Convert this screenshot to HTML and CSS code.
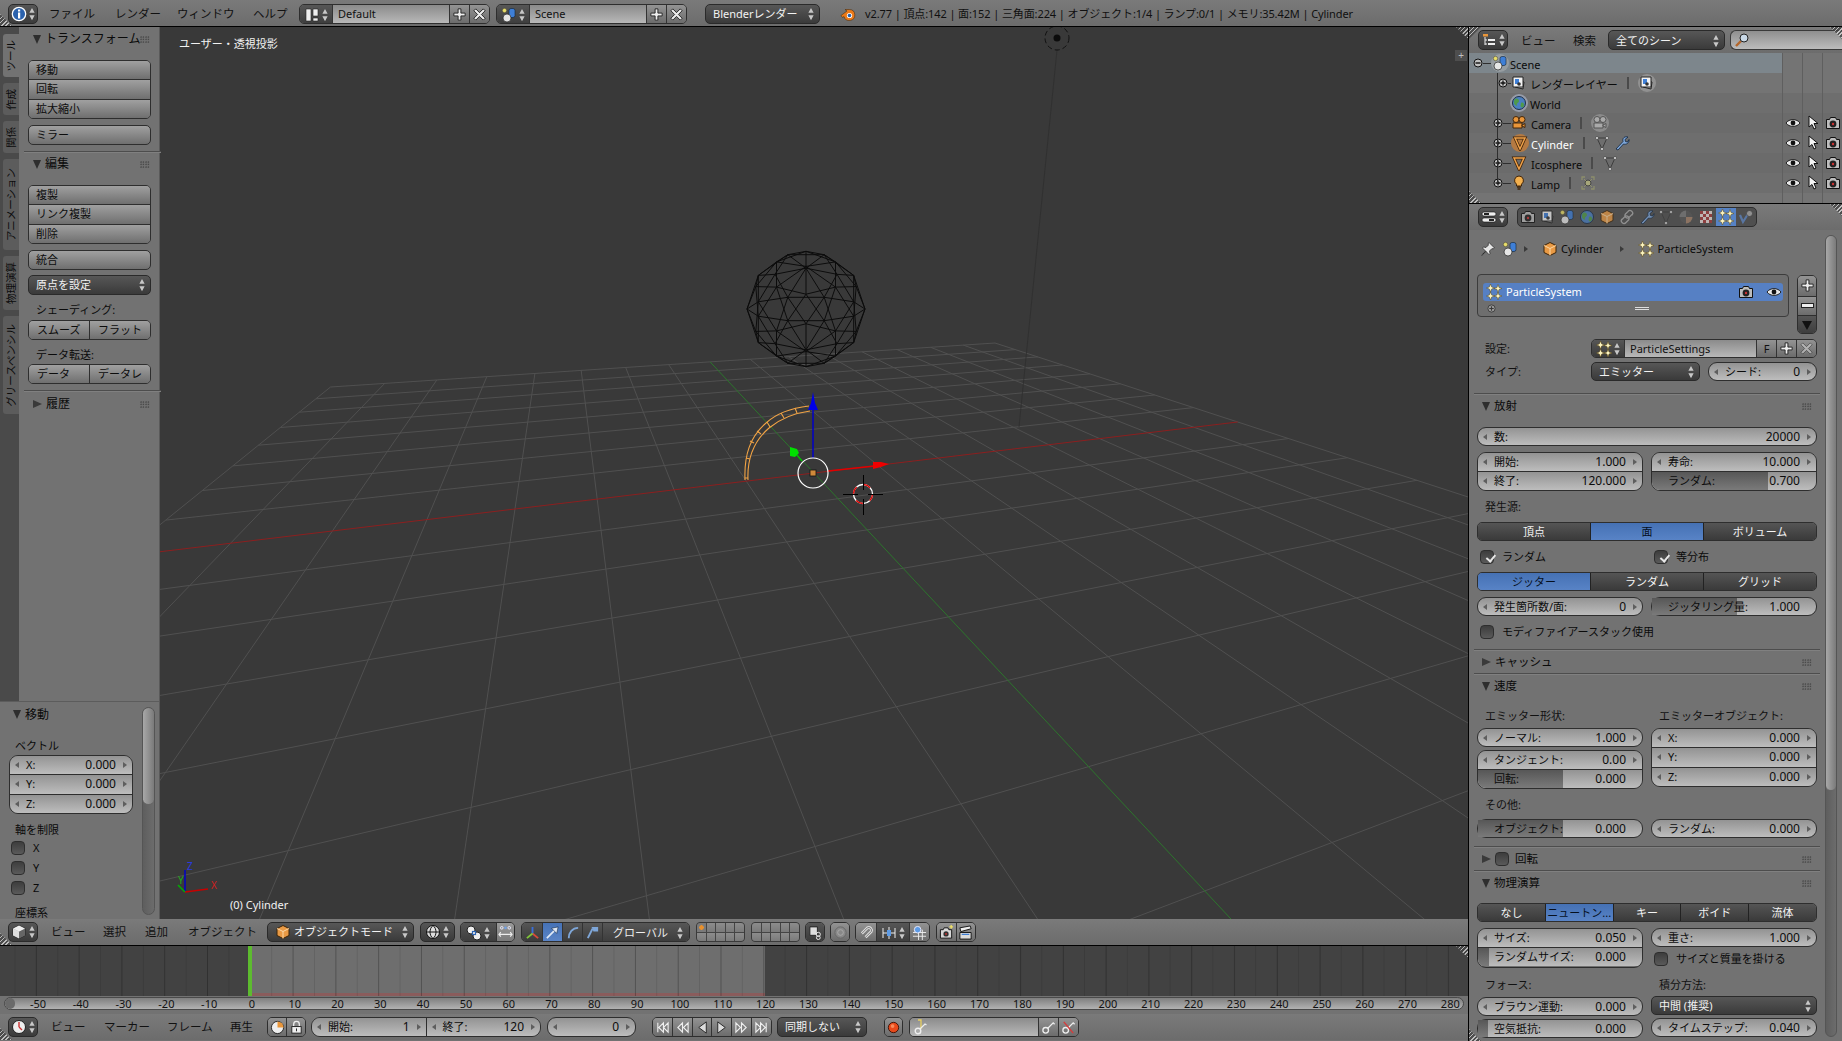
FILE: index.html
```html
<!DOCTYPE html>
<html lang="ja">
<head>
<meta charset="utf-8">
<title>Blender</title>
<link rel="stylesheet" href="styles.css">
</head>
<body>
<svg class="defs" width="0" height="0">
  <symbol id="i-ud" viewBox="0 0 8 16"><path d="M4 1 7 6.5H1zM4 15 1 9.500H7z" fill="currentColor"/></symbol>
  <symbol id="i-info" viewBox="0 0 16 16"><circle cx="8" cy="8" r="6.700" fill="#2b62ad" stroke="#fff" stroke-width="1.300"/><rect x="7" y="3.500" width="2.200" height="2" fill="#fff"/><rect x="7" y="6.500" width="2.200" height="6" fill="#fff"/></symbol>
  <symbol id="i-layout" viewBox="0 0 16 16"><path d="M2 2h5v12H2zM9 2h5v7H9zM9 11h5v3H9z" fill="#eee" stroke="#222" stroke-width=".6"/></symbol>
  <symbol id="i-scene" viewBox="0 0 16 16"><circle cx="3.500" cy="3.500" r="2.200" fill="#e8dd6a" stroke="#333" stroke-width=".5"/><rect x="8" y="1.500" width="6" height="9" rx="2" fill="#3f7fd6" stroke="#123" stroke-width=".6"/><circle cx="6" cy="11" r="4" fill="#e6e6e6" stroke="#222" stroke-width=".7"/></symbol>
  <symbol id="i-plus" viewBox="0 0 16 16"><path d="M6.500 2h3v4.500H14v3H9.500V14h-3V9.500H2v-3h4.500z" fill="#eee" stroke="#222"/></symbol>
  <symbol id="i-x" viewBox="0 0 16 16"><path d="M4 2l4 4 4-4 2 2-4 4 4 4-2 2-4-4-4 4-2-2 4-4-4-4z" fill="#eee" stroke="#222"/></symbol>
  <symbol id="i-blender" viewBox="0 0 16 16"><path d="M1 9.500 7 5 5 3.500h4.500A5.500 5.500 0 1 1 4 10.500L2.500 11.500z" fill="#ea7a1a" stroke="#3a2306" stroke-width=".5"/><circle cx="9.500" cy="9.500" r="2.600" fill="#fff"/><circle cx="9.500" cy="9.500" r="1.800" fill="#2b62ad"/></symbol>
  <symbol id="i-outliner" viewBox="0 0 16 16"><path d="M2 2h5v2.500H2z" fill="#e9963a"/><path d="M4 5v8M4 8h2M4 12h2" stroke="#eee" fill="none"/><path d="M7 7h7v2H7zM7 11h7v2H7z" fill="#eee"/></symbol>
  <symbol id="i-search" viewBox="0 0 16 16"><path d="M2 14 7 9" stroke="#b4662a" stroke-width="2.400"/><circle cx="10" cy="6" r="4" fill="#c9d8e6" stroke="#222"/></symbol>
  <symbol id="i-minus" viewBox="0 0 10 10"><circle cx="5" cy="5" r="4" fill="#c0c0c0" stroke="#111"/><path d="M2.500 5h5" stroke="#111" stroke-width="1.400"/></symbol>
  <symbol id="i-exp" viewBox="0 0 10 10"><circle cx="5" cy="5" r="4" fill="#c0c0c0" stroke="#111"/><path d="M2.500 5h5M5 2.500v5" stroke="#111" stroke-width="1.300"/></symbol>
  <symbol id="i-rl" viewBox="0 0 16 16"><path d="M4 5l9 2-1 7-8-2z" fill="#bbb" stroke="#222"/><path d="M2 2h10v10H2z" fill="#f2f2f2" stroke="#222"/><path d="M4 4h4v5H4z" fill="#3f7fd6"/><circle cx="8" cy="9" r="1.800" fill="#333"/></symbol>
  <symbol id="i-world" viewBox="0 0 16 16"><circle cx="8" cy="8" r="6.500" fill="#4a7fc0" stroke="#1d2f47"/><path d="M4 4c2-1 4 0 4 2s-3 2-2 4-3 0-3-2 0-3 1-4zM10 8c2-1 3 0 3 2s-2 3-3 2 0-3 0-4z" fill="#4f9a4a"/></symbol>
  <symbol id="i-camera" viewBox="0 0 16 16"><circle cx="5" cy="4.500" r="3" fill="#e9963a" stroke="#43260a"/><circle cx="11" cy="4.500" r="3" fill="#e9963a" stroke="#43260a"/><path d="M2 8h9v5H2z" fill="#e9963a" stroke="#43260a"/><path d="M11 10l3-1.500v4L11 11z" fill="#e9963a" stroke="#43260a"/></symbol>
  <symbol id="i-camerag" viewBox="0 0 16 16"><circle cx="5" cy="4.500" r="3" fill="#aaa" stroke="#555"/><circle cx="11" cy="4.500" r="3" fill="#aaa" stroke="#555"/><path d="M2 8h9v5H2z" fill="#aaa" stroke="#555"/><path d="M11 10l3-1.500v4L11 11z" fill="#aaa" stroke="#555"/></symbol>
  <symbol id="i-mesh" viewBox="0 0 16 16"><path d="M3 3h10L8 14z" fill="none" stroke="#3f2308" stroke-width="3"/><path d="M3 3h10L8 14z" fill="none" stroke="#f0a24a" stroke-width="1.500"/></symbol>
  <symbol id="i-meshg" viewBox="0 0 16 16"><path d="M3 3h10L8 14z" fill="none" stroke="#3c3c3c"/><circle cx="3" cy="3" r="1.500" fill="#ddd" stroke="#222" stroke-width=".5"/><circle cx="13" cy="3" r="1.500" fill="#ddd" stroke="#222" stroke-width=".5"/><circle cx="8" cy="14" r="1.500" fill="#ddd" stroke="#222" stroke-width=".5"/></symbol>
  <symbol id="i-wrench" viewBox="0 0 16 16"><path d="M2 14 9 6.500C8 3 11 1 14 2L11 4.500l.5 2 2 .5L15 4.500C15.500 8 12 10 9.500 9L4 15z" fill="#7ea6d8" stroke="#10233c" stroke-width=".8"/></symbol>
  <symbol id="i-lamp" viewBox="0 0 16 16"><path d="M8 1a4.500 4.500 0 0 0-2.500 8.200V11h5V9.200A4.500 4.500 0 0 0 8 1z" fill="#f3b04e" stroke="#3f2308"/><path d="M6 12h4M6.500 14h3" stroke="#3f2308" stroke-width="1.400"/></symbol>
  <symbol id="i-lampd" viewBox="0 0 16 16"><circle cx="8" cy="8" r="3" fill="#a7a77a" stroke="#444"/><path d="M2 5V2h3M14 5V2h-3M2 11v3h3M14 11v3h-3" fill="none" stroke="#8d8f6c" stroke-width="1.300"/><path d="M4 4l2 2M12 4l-2 2M4 12l2-2M12 12l-2-2" stroke="#8d8f6c"/></symbol>
  <symbol id="i-eye" viewBox="0 0 16 16"><path d="M1 8c3-4.500 11-4.500 14 0-3 4.500-11 4.500-14 0z" fill="#e8e8e8" stroke="#222"/><circle cx="8" cy="8" r="2.400" fill="#111"/></symbol>
  <symbol id="i-cursor" viewBox="0 0 16 16"><path d="M4 1v11l3-2.500 2 4.500 2-1-2-4.500h4z" fill="#f4f4f4" stroke="#111"/></symbol>
  <symbol id="i-rcam" viewBox="0 0 16 16"><path d="M1.500 4.500h3l1-2h5l1 2h3v9h-13z" fill="#bdbdbd" stroke="#111"/><circle cx="8" cy="9" r="3.400" fill="#222"/><circle cx="8" cy="9" r="1.200" fill="#c33"/></symbol>
  <symbol id="i-props" viewBox="0 0 16 16"><rect x="1" y="3" width="14" height="4" rx="2" fill="#eee" stroke="#111" stroke-width=".6"/><rect x="1" y="9" width="14" height="4" rx="2" fill="#eee" stroke="#111" stroke-width=".6"/><rect x="3" y="4" width="5" height="2" fill="#222"/><rect x="8" y="10" width="5" height="2" fill="#222"/></symbol>
  <symbol id="i-cube" viewBox="0 0 16 16"><path d="M8 1.500 14 4.500v7L8 14.500 2 11.500v-7z" fill="#e99a45" stroke="#3d2408"/><path d="M2 4.500 8 7.500l6-3M8 7.500v7" fill="none" stroke="#fbd7a6"/></symbol>
  <symbol id="i-cubew" viewBox="0 0 16 16"><path d="M8 1.500 14 4.500v7L8 14.500 2 11.500v-7z" fill="#aaa" stroke="#222"/><path d="M8 7.500 14 4.500v7L8 14.500z" fill="#666"/><path d="M2 4.500 8 1.500 14 4.500 8 7.500z" fill="#eee"/><path d="M2 4.500 8 7.500V14.500L2 11.500z" fill="#ddd"/></symbol>
  <symbol id="i-link" viewBox="0 0 16 16"><path d="M2.500 11 6 7.500a2.500 2.500 0 0 1 3.500 3.500L7 13.500A2.500 2.500 0 0 1 3 10zM13.500 5 10 8.500A2.500 2.500 0 0 1 6.500 5L9 2.500A2.500 2.500 0 0 1 13 6z" fill="none" stroke="#aaa" stroke-width="1.300"/></symbol>
  <symbol id="i-mat" viewBox="0 0 16 16"><circle cx="8" cy="8" r="6.500" fill="#565656"/><path d="M8 8h6.500A6.500 6.500 0 0 1 8 14.500z" fill="#a4826a"/><path d="M1.500 8A6.500 6.500 0 0 1 8 1.500V8z" fill="#7a7a7a"/></symbol>
  <symbol id="i-tex" viewBox="0 0 16 16"><rect x="2" y="2" width="12" height="12" fill="#e8dcd8"/><path d="M2 2h3v3H2zM8 2h3v3H8zM5 5h3v3H5zM11 5h3v3h-3zM2 8h3v3H2zM8 8h3v3H8zM5 11h3v3H5zM11 11h3v3h-3z" fill="#a63a3a"/></symbol>
  <symbol id="i-part" viewBox="0 0 16 16"><g fill="#fdf6c2" stroke="#5e4812" stroke-width=".5"><path d="M4.500 0 5.600 2.900 8.500 4 5.600 5.100 4.500 8 3.400 5.100.5 4 3.400 2.900z"/><path d="M12 .5 13 3.500 16 4.500 13 5.500 12 8.500 11 5.500 8 4.500 11 3.500z"/><path d="M4.500 8 5.600 10.900 8.500 12 5.600 13.100 4.500 16 3.400 13.100.5 12 3.400 10.900z"/><path d="M12 8 13 11 16 12 13 13 12 16 11 13 8 12 11 11z"/></g></symbol>
  <symbol id="i-phys" viewBox="0 0 16 16"><path d="M2 6l3 7 5-8" fill="none" stroke="#5d86c4" stroke-width="2.200"/><circle cx="11.500" cy="4.500" r="3" fill="#aaa" stroke="#333" stroke-width=".6"/></symbol>
  <symbol id="i-pin" viewBox="0 0 16 16"><path d="M9 1.500 14.500 7l-1.500 1-1-.5-2.500 2.500.5 2.500-1 1L5.500 10 2 14.500l-.5-.5L6 10.500 2.500 7l1-1 2.500.500L8.500 4 8 3z" fill="#e6e6e6" stroke="#222" stroke-width=".7"/></symbol>
  <symbol id="i-shade" viewBox="0 0 16 16"><circle cx="8" cy="8" r="6.500" fill="#ddd" stroke="#111"/><path d="M1.500 8h13M8 1.500c-4 3-4 10 0 13M8 1.500c4 3 4 10 0 13" fill="none" stroke="#111"/></symbol>
  <symbol id="i-pivot" viewBox="0 0 16 16"><circle cx="5" cy="5" r="4" fill="#eee" stroke="#222"/><circle cx="11" cy="11" r="4" fill="#eee" stroke="#222"/><rect x="6.500" y="6.500" width="3" height="3" fill="#eee" stroke="#2c62b0" stroke-width="1.200"/></symbol>
  <symbol id="i-around" viewBox="0 0 16 16"><circle cx="4" cy="3" r="1.400" fill="none" stroke="#eef"/><circle cx="8" cy="3" r="1.400" fill="#6fa0e6"/><circle cx="12" cy="3" r="1.400" fill="none" stroke="#eef"/><path d="M1 10h14M3 7.500 1 10l2 2.500M13 7.500l2 2.500-2 2.500" fill="none" stroke="#eee" stroke-width="1.200"/></symbol>
  <symbol id="i-axes" viewBox="0 0 16 16"><path d="M8 2v8" stroke="#3a6fd8" stroke-width="2"/><path d="M8 9 14 14" stroke="#d84a3a" stroke-width="2"/><path d="M8 9 2 14" stroke="#7fc43a" stroke-width="2"/></symbol>
  <symbol id="i-arrow" viewBox="0 0 16 16"><path d="M2 14 10 6" stroke="#dfe8f5" stroke-width="1.800"/><path d="M14 2 12.500 9 7 3.500z" fill="#dfe8f5" stroke="#10233c" stroke-width=".6"/></symbol>
  <symbol id="i-rot" viewBox="0 0 16 16"><path d="M4 14C4 8 8 3 14 3" fill="none" stroke="#7ea6d8" stroke-width="2"/></symbol>
  <symbol id="i-scale" viewBox="0 0 16 16"><path d="M3 14 8 4" stroke="#7ea6d8" stroke-width="2"/><path d="M7 2h7v5H9z" fill="#7ea6d8"/></symbol>
  <symbol id="i-parent" viewBox="0 0 16 16"><path d="M2 2h8v9H2z" fill="#ddd" stroke="#222"/><circle cx="11" cy="10" r="2.200" fill="none" stroke="#eee"/><circle cx="11" cy="13.500" r="2" fill="none" stroke="#eee"/></symbol>
  <symbol id="i-prop" viewBox="0 0 16 16"><circle cx="8" cy="8" r="6" fill="#888" stroke="#666"/><circle cx="8" cy="8" r="3" fill="none" stroke="#aaa"/></symbol>
  <symbol id="i-magnet" viewBox="0 0 16 16"><path d="M3 9 9 3a3 3 0 0 1 4 4l-6 6" fill="none" stroke="#ddd" stroke-width="3"/><path d="M3 9 9 3a3 3 0 0 1 4 4l-6 6" fill="none" stroke="#555" stroke-width=".8"/></symbol>
  <symbol id="i-snapm" viewBox="0 0 16 16"><path d="M2 3v10M14 3v10M8 2v12" stroke="#eee"/><path d="M2 8h12" stroke="#eee"/><rect x="6" y="5" width="4" height="6" fill="#5d9be6"/></symbol>
  <symbol id="i-snap" viewBox="0 0 16 16"><path d="M1 8h14M1 12h14M7 5v11M11 5v11" stroke="#eee"/><circle cx="6" cy="5" r="3.500" fill="#5d9be6" stroke="#eef"/></symbol>
  <symbol id="i-rimg" viewBox="0 0 16 16"><path d="M1.500 5h3l1-2h4l1 2h3v9h-12z" fill="#d8d8d8" stroke="#111"/><circle cx="7.500" cy="9.500" r="2.800" fill="#333"/><circle cx="7.500" cy="9.500" r="1" fill="#c33"/><path d="M13 0v4M11 2h4" stroke="#f2e266" stroke-width="1.400"/></symbol>
  <symbol id="i-ranim" viewBox="0 0 16 16"><path d="M2 8h12v7H2z" fill="#dcdcdc" stroke="#111"/><path d="M2 3 13 1l1 3L3 7z" fill="#eee" stroke="#111"/><path d="M4 10h8" stroke="#3f7fd6" stroke-width="1.500"/></symbol>
  <symbol id="i-clock" viewBox="0 0 16 16"><circle cx="8" cy="8" r="6.500" fill="#eee" stroke="#222"/><path d="M8 8V3M8 8l3 3" stroke="#c33" stroke-width="1.400"/></symbol>
  <symbol id="i-preview" viewBox="0 0 16 16"><circle cx="8" cy="8" r="6.500" fill="#eee" stroke="#222"/><path d="M8 8V1.500A6.500 6.500 0 0 1 14.500 8z" fill="#e9963a"/></symbol>
  <symbol id="i-lock" viewBox="0 0 16 16"><path d="M5 7V4.500a3 3 0 0 1 6 0V7" fill="none" stroke="#eee" stroke-width="1.400"/><rect x="3" y="7" width="10" height="7" fill="#eee" stroke="#222"/><path d="M8 9v3" stroke="#222"/></symbol>
  <symbol id="i-first" viewBox="0 0 16 16"><path d="M3 3v10M9 3 4 8l5 5zM14 3 9 8l5 5z" fill="none" stroke="#eee" stroke-width="1.200"/></symbol>
  <symbol id="i-prev" viewBox="0 0 16 16"><path d="M8 3 3 8l5 5zM14 3 9 8l5 5z" fill="none" stroke="#eee" stroke-width="1.200"/></symbol>
  <symbol id="i-back" viewBox="0 0 16 16"><path d="M12 2 4 8l8 6z" fill="#ddd" stroke="#222"/></symbol>
  <symbol id="i-play" viewBox="0 0 16 16"><path d="M4 2l8 6-8 6z" fill="#ddd" stroke="#222"/></symbol>
  <symbol id="i-next" viewBox="0 0 16 16"><path d="M2 3l5 5-5 5zM8 3l5 5-5 5z" fill="none" stroke="#eee" stroke-width="1.200"/></symbol>
  <symbol id="i-last" viewBox="0 0 16 16"><path d="M13 3v10M2 3l5 5-5 5zM7 3l5 5-5 5z" fill="none" stroke="#eee" stroke-width="1.200"/></symbol>
  <symbol id="i-rec" viewBox="0 0 16 16"><circle cx="8" cy="8" r="5.500" fill="#e8491a" stroke="#3a1005"/><circle cx="7" cy="6.500" r="2" fill="#f78a5a"/></symbol>
  <symbol id="i-keyset" viewBox="0 0 16 16"><path d="M6 1h3v9" fill="none" stroke="#e8d060" stroke-width="1.300"/><circle cx="6" cy="12" r="2.800" fill="none" stroke="#eee" stroke-width="1.400"/><path d="M8 10 13 5l1.500 1" fill="none" stroke="#eee" stroke-width="1.300"/></symbol>
  <symbol id="i-key" viewBox="0 0 16 16"><circle cx="5" cy="11" r="3" fill="none" stroke="#eee" stroke-width="1.400"/><path d="M7 9l6-6 1.500 1.500" fill="none" stroke="#eee" stroke-width="1.400"/></symbol>
  <symbol id="i-keyx" viewBox="0 0 16 16"><circle cx="5" cy="11" r="3" fill="none" stroke="#eee" stroke-width="1.400"/><path d="M7 9l6-6 1.500 1.500" fill="none" stroke="#eee" stroke-width="1.400"/><path d="M3 2l10 12" stroke="#d83a3a" stroke-width="1.500"/></symbol>
</svg>

<div class="app">
  <header class="hdr topbar">
    <div class="hatch h-bl"></div>
    <div class="hbtn w30 ml8"><svg class="ic"><use href="#i-info"/></svg><svg class="ud"><use href="#i-ud"/></svg></div>
    <div class="menu w66 ml11">ファイル</div><div class="menu w62">レンダー</div><div class="menu w76">ウィンドウ</div><div class="menu w45">ヘルプ</div>
    <div class="grp w191 ml1">
      <div class="hbtn-in w32"><svg class="ic"><use href="#i-layout"/></svg><svg class="ud"><use href="#i-ud"/></svg></div>
      <div class="tf f1">Default</div>
      <div class="ib w20"><svg class="ic"><use href="#i-plus"/></svg></div>
      <div class="ib w20"><svg class="ic"><use href="#i-x"/></svg></div>
    </div>
    <div class="grp w191 ml6">
      <div class="hbtn-in w32"><svg class="ic"><use href="#i-scene"/></svg><svg class="ud"><use href="#i-ud"/></svg></div>
      <div class="tf f1">Scene</div>
      <div class="ib w20"><svg class="ic"><use href="#i-plus"/></svg></div>
      <div class="ib w20"><svg class="ic"><use href="#i-x"/></svg></div>
    </div>
    <div class="dd w115 ml18"><span>Blenderレンダー</span><svg class="ud"><use href="#i-ud"/></svg></div>
    <svg class="ic ml20"><use href="#i-blender"/></svg>
    <div class="stats">v2.77 | 頂点:142 | 面:152 | 三角面:224 | オブジェクト:1/4 | ランプ:0/1 | メモリ:35.42M | Cylinder</div>
  </header>

  <div class="main">
    <div class="leftcol">
      <section class="viewport">
        <svg class="scene3d" viewBox="0 27 1468 892">
          <g id="grid" class="gridlines"></g>
          <line id="axis-x" class="axis-x"/>
          <line id="axis-y" class="axis-y"/>
          <line x1="1057" y1="50" x2="1019" y2="427" class="lampline"/>
          <circle cx="1057" cy="38" r="3.500" fill="#0c0c0c"/>
          <circle cx="1057" cy="38" r="12" class="lampring"/>
          <g id="ico" class="ico"></g>
          <path d="M745 480C744 455 750 437 766 423 778 412 792 408 809 406M748 480C747 458 754 441 769 428 781 418 795 413 810 411" class="cyl"/>
          <path d="M745 478 748 478M746 458 750 459M750 441 754 443M757 431 761 434M767 422 770 427M781 413 784 418M795 408 797 413" class="cyl"/>
          <line x1="813" y1="458" x2="813" y2="405" stroke="#0000c8" stroke-width="1.500"/>
          <path d="M813 392 815 403 818 410H808L811 403z" fill="#0000e6"/>
          <line x1="802" y1="461" x2="796" y2="454" stroke="#00c000" stroke-width="1.200"/>
          <path d="M790 447 797 449 799 453 795 457 790 456z" fill="#00e000"/>
          <line x1="828" y1="471" x2="875" y2="466" stroke="#e00000" stroke-width="1.500"/>
          <path d="M873 462 881 462 889 464 881 467 873 469z" fill="#f00000"/>
          <circle cx="813" cy="473" r="15" class="gizmo"/>
          <rect x="810" y="470" width="6" height="6" fill="#d08a3a" stroke="#111" stroke-width=".8"/>
          <circle cx="863" cy="494" r="9.500" class="cur-w"/>
          <circle cx="863" cy="494" r="9.500" class="cur-r"/>
          <path d="M843 494.500h15M868 494.500h15M863.500 475v15M863.500 499v16" stroke="#000" stroke-width="1" fill="none"/>
          <path d="M185 892V870" stroke="#0000c8" stroke-width="1.500"/>
          <path d="M185 892 208 889" stroke="#c80000" stroke-width="1.500"/>
          <path d="M185 892 178 885" stroke="#00b000" stroke-width="1.500"/>
        </svg>
        <div class="mini mini-z">Z</div><div class="mini mini-y">Y</div><div class="mini mini-x">X</div>
        <div class="vp-label vp-view">ユーザー・透視投影</div>
        <div class="vp-label vp-obj">(0) Cylinder</div>
        <div class="hatch h-tr"></div>
        <div class="npanel">+</div>

        <aside class="toolcol">
          <div class="toolrow">
            <nav class="tabs">
              <div class="tab active t-a"><span>ツール</span></div>
              <div class="tab t-b"><span>作成</span></div>
              <div class="tab t-b"><span>関係</span></div>
              <div class="tab t-c"><span>アニメーション</span></div>
              <div class="tab t-d"><span>物理演算</span></div>
              <div class="tab t-e"><span>グリースペンシル</span></div>
            </nav>
            <div class="shelf">
              <div class="ph ph-shelf h24"><i class="tri-d"></i><span>トランスフォーム</span><i class="grip"></i></div>
              <div class="tools mt9">
                <div class="stack tall r5"><div class="tb">移動</div><div class="tb">回転</div><div class="tb">拡大縮小</div></div>
                <div class="tb solo mt6">ミラー</div>
              </div>
              <div class="sep mt6 sep-shelf"></div>
              <div class="ph ph-shelf h22"><i class="tri-d"></i><span>編集</span><i class="grip"></i></div>
              <div class="tools mt10">
                <div class="stack tall r5"><div class="tb">複製</div><div class="tb">リンク複製</div><div class="tb">削除</div></div>
                <div class="tb solo mt6">統合</div>
                <div class="dd full mt5"><span>原点を設定</span><svg class="ud"><use href="#i-ud"/></svg></div>
                <div class="lbl mt6">シェーディング:</div>
                <div class="split mt1"><div class="tb">スムーズ</div><div class="tb">フラット</div></div>
                <div class="lbl mt6">データ転送:</div>
                <div class="split"><div class="tb">データ</div><div class="tb">データレ</div></div>
              </div>
              <div class="sep mt6 sep-shelf"></div>
              <div class="ph ph-shelf h24"><i class="tri-r"></i><span>履歴</span><i class="grip"></i></div>
            </div>
          </div>
          <div class="oppanel">
            <div class="ph ph-op h23"><i class="tri-d"></i><span>移動</span><i class="grip"></i></div>
            <div class="lbl-op mt11">ベクトル</div>
            <div class="stack tall r9 op-stack">
              <div class="num"><span>X:</span><b>0.000</b></div>
              <div class="num"><span>Y:</span><b>0.000</b></div>
              <div class="num"><span>Z:</span><b>0.000</b></div>
            </div>
            <div class="lbl-op mt6">軸を制限</div>
            <div class="chk op-chk"><i class="box"></i><span>X</span></div>
            <div class="chk op-chk"><i class="box"></i><span>Y</span></div>
            <div class="chk op-chk"><i class="box"></i><span>Z</span></div>
            <div class="lbl-op mt5">座標系</div>
            <div class="sb op-sb"><div class="sb-th op-th"></div></div>
          </div>
        </aside>
      </section>

      <header class="hdr">
        <div class="hatch h-bl"></div>
        <div class="hbtn w30 ml8"><svg class="ic"><use href="#i-cubew"/></svg><svg class="ud"><use href="#i-ud"/></svg></div>
        <div class="menu w52 ml13">ビュー</div><div class="menu w42">選択</div><div class="menu w43">追加</div><div class="menu w79">オブジェクト</div>
        <div class="dd w147"><svg class="ic mr3"><use href="#i-cube"/></svg><span>オブジェクトモード</span><svg class="ud"><use href="#i-ud"/></svg></div>
        <div class="hbtn w35 ml6"><svg class="ic"><use href="#i-shade"/></svg><svg class="ud"><use href="#i-ud"/></svg></div>
        <div class="grp dark w55 ml5">
          <div class="hbtn-in w35"><svg class="ic"><use href="#i-pivot"/></svg><svg class="ud"><use href="#i-ud"/></svg></div>
          <div class="ib lit f1"><svg class="ic"><use href="#i-around"/></svg></div>
        </div>
        <div class="grp dark w169 ml6">
          <div class="ib drk w20"><svg class="ic"><use href="#i-axes"/></svg></div>
          <div class="ib act w20"><svg class="ic"><use href="#i-arrow"/></svg></div>
          <div class="ib drk w20"><svg class="ic"><use href="#i-rot"/></svg></div>
          <div class="ib drk w20"><svg class="ic"><use href="#i-scale"/></svg></div>
          <div class="hbtn-in f1 between"><span>グローバル</span><svg class="ud"><use href="#i-ud"/></svg></div>
        </div>
        <div class="layers ml6"><i class="on"></i><i></i><i></i><i></i><i></i><i></i><i></i><i></i><i></i><i></i></div>
        <div class="layers ml6"><i></i><i></i><i></i><i></i><i></i><i></i><i></i><i></i><i></i><i></i></div>
        <div class="grp w20 ml5"><div class="ib drk f1"><svg class="ic"><use href="#i-parent"/></svg></div></div>
        <div class="grp w20 ml5"><div class="ib f1"><svg class="ic"><use href="#i-prop"/></svg></div></div>
        <div class="grp w75 ml5">
          <div class="ib w20"><svg class="ic"><use href="#i-magnet"/></svg></div>
          <div class="hbtn-in f1"><svg class="ic"><use href="#i-snapm"/></svg><svg class="ud"><use href="#i-ud"/></svg></div>
          <div class="ib w20"><svg class="ic"><use href="#i-snap"/></svg></div>
        </div>
        <div class="grp w40 ml6">
          <div class="ib f1"><svg class="ic"><use href="#i-rimg"/></svg></div>
          <div class="ib f1"><svg class="ic"><use href="#i-ranim"/></svg></div>
        </div>
      </header>

      <section class="timeline">
        <div class="range"><div class="range-bar"></div></div>
        <div class="playhead"></div>
        <div class="hatch h-tr"></div>
      </section>
      <div class="ruler">
        <div class="ruler-bar">
          <i class="scrub"></i>
          <span>-50</span><span>-40</span><span>-30</span><span>-20</span><span>-10</span><span>0</span><span>10</span><span>20</span><span>30</span><span>40</span><span>50</span><span>60</span><span>70</span><span>80</span><span>90</span><span>100</span><span>110</span><span>120</span><span>130</span><span>140</span><span>150</span><span>160</span><span>170</span><span>180</span><span>190</span><span>200</span><span>210</span><span>220</span><span>230</span><span>240</span><span>250</span><span>260</span><span>270</span><span>280</span>
        </div>
      </div>

      <header class="hdr">
        <div class="hatch h-bl"></div>
        <div class="hbtn w30 ml8"><svg class="ic"><use href="#i-clock"/></svg><svg class="ud"><use href="#i-ud"/></svg></div>
        <div class="menu w53 ml13">ビュー</div><div class="menu w63">マーカー</div><div class="menu w63">フレーム</div><div class="menu w37">再生</div>
        <div class="grp w39">
          <div class="ib f1"><svg class="ic"><use href="#i-preview"/></svg></div>
          <div class="ib f1"><svg class="ic"><use href="#i-lock"/></svg></div>
        </div>
        <div class="pair w230 ml5">
          <div class="num"><span>開始:</span><b>1</b></div>
          <div class="num"><span>終了:</span><b>120</b></div>
        </div>
        <div class="num solo w89 ml6"><span></span><b>0</b></div>
        <div class="grp w120 ml16">
          <div class="ib f1"><svg class="ic"><use href="#i-first"/></svg></div>
          <div class="ib f1"><svg class="ic"><use href="#i-prev"/></svg></div>
          <div class="ib f1"><svg class="ic"><use href="#i-back"/></svg></div>
          <div class="ib f1"><svg class="ic"><use href="#i-play"/></svg></div>
          <div class="ib f1"><svg class="ic"><use href="#i-next"/></svg></div>
          <div class="ib f1"><svg class="ic"><use href="#i-last"/></svg></div>
        </div>
        <div class="dd w90 ml5"><span>同期しない</span><svg class="ud"><use href="#i-ud"/></svg></div>
        <div class="grp w19 ml17"><div class="ib f1"><svg class="ic"><use href="#i-rec"/></svg></div></div>
        <div class="grp w170 ml6">
          <div class="tf f1 keyf"><svg class="ic"><use href="#i-keyset"/></svg></div>
          <div class="ib w20"><svg class="ic"><use href="#i-key"/></svg></div>
          <div class="ib w20"><svg class="ic"><use href="#i-keyx"/></svg></div>
        </div>
      </header>
    </div>

    <div class="rightcol">
      <header class="hdr ol-hdr">
        <div class="hatch h-tl"></div>
        <div class="hatch h-tr"></div>
        <div class="hbtn w30 ml9"><svg class="ic"><use href="#i-outliner"/></svg><svg class="ud"><use href="#i-ud"/></svg></div>
        <div class="menu w52 ml13">ビュー</div><div class="menu w35">検索</div>
        <div class="dd w117"><span>全てのシーン</span><svg class="ud"><use href="#i-ud"/></svg></div>
        <div class="searchbox ml5"><svg class="ic"><use href="#i-search"/></svg></div>
      </header>
      <section class="outliner">
        <div class="ol-row sel"><div class="ol-main"><svg class="exp ml4"><use href="#i-minus"/></svg><i class="hl w8"></i><span class="hi hi-g"><svg class="ic"><use href="#i-scene"/></svg></span><span class="ml2 ol-t">Scene</span></div><i class="col"></i><i class="col"></i><i class="col"></i></div>
        <div class="ol-row"><div class="ol-main"><svg class="exp ml29"><use href="#i-exp"/></svg><i class="hl w3"></i><svg class="ic"><use href="#i-rl"/></svg><span class="ml3 ol-t">レンダーレイヤー</span><i class="ol-sep"></i><span class="hi hi-g"><svg class="ic"><use href="#i-rl"/></svg></span></div><i class="col"></i><i class="col"></i><i class="col"></i></div>
        <div class="ol-row alt"><div class="ol-main"><span class="hi hi-b ml41"><svg class="ic"><use href="#i-world"/></svg></span><span class="ml3 ol-t">World</span></div><i class="col"></i><i class="col"></i><i class="col"></i></div>
        <div class="ol-row dk"><div class="ol-main"><svg class="exp ml24"><use href="#i-exp"/></svg><i class="hl w8"></i><svg class="ic"><use href="#i-camera"/></svg><span class="ml4 ol-t">Camera</span><i class="ol-sep"></i><span class="hi hi-g"><svg class="ic"><use href="#i-camerag"/></svg></span></div><i class="col"><svg class="ic"><use href="#i-eye"/></svg></i><i class="col"><svg class="ic"><use href="#i-cursor"/></svg></i><i class="col"><svg class="ic"><use href="#i-rcam"/></svg></i></div>
        <div class="ol-row alt"><div class="ol-main"><svg class="exp ml24"><use href="#i-exp"/></svg><i class="hl w8"></i><span class="hi hi-o"><svg class="ic"><use href="#i-mesh"/></svg></span><span class="ml3 ol-t white">Cylinder</span><i class="ol-sep"></i><svg class="ic"><use href="#i-meshg"/></svg><svg class="ic ml4"><use href="#i-wrench"/></svg></div><i class="col"><svg class="ic"><use href="#i-eye"/></svg></i><i class="col"><svg class="ic"><use href="#i-cursor"/></svg></i><i class="col"><svg class="ic"><use href="#i-rcam"/></svg></i></div>
        <div class="ol-row dk"><div class="ol-main"><svg class="exp ml24"><use href="#i-exp"/></svg><i class="hl w8"></i><svg class="ic"><use href="#i-mesh"/></svg><span class="ml4 ol-t">Icosphere</span><i class="ol-sep"></i><svg class="ic"><use href="#i-meshg"/></svg></div><i class="col"><svg class="ic"><use href="#i-eye"/></svg></i><i class="col"><svg class="ic"><use href="#i-cursor"/></svg></i><i class="col"><svg class="ic"><use href="#i-rcam"/></svg></i></div>
        <div class="ol-row alt"><div class="ol-main"><svg class="exp ml24"><use href="#i-exp"/></svg><i class="hl w8"></i><svg class="ic"><use href="#i-lamp"/></svg><span class="ml4 ol-t">Lamp</span><i class="ol-sep"></i><svg class="ic"><use href="#i-lampd"/></svg></div><i class="col"><svg class="ic"><use href="#i-eye"/></svg></i><i class="col"><svg class="ic"><use href="#i-cursor"/></svg></i><i class="col"><svg class="ic"><use href="#i-rcam"/></svg></i></div>
        <div class="ol-row end"><div class="ol-main"></div><i class="col"></i><i class="col"></i><i class="col"></i></div>
        <div class="ol-tree"></div>
        <div class="hatch h-bl"></div>
      </section>

      <section class="properties">
        <header class="hdr">
          <div class="hatch h-tr"></div>
          <div class="hbtn w30 ml9"><svg class="ic"><use href="#i-props"/></svg><svg class="ud"><use href="#i-ud"/></svg></div>
          <div class="ptabs">
            <i><svg class="ic"><use href="#i-rcam"/></svg></i><i><svg class="ic"><use href="#i-rl"/></svg></i><i><svg class="ic"><use href="#i-scene"/></svg></i><i><svg class="ic"><use href="#i-world"/></svg></i><i><svg class="ic"><use href="#i-cube"/></svg></i><i><svg class="ic"><use href="#i-link"/></svg></i><i><svg class="ic"><use href="#i-wrench"/></svg></i><i><svg class="ic"><use href="#i-meshg"/></svg></i><i><svg class="ic"><use href="#i-mat"/></svg></i><i><svg class="ic"><use href="#i-tex"/></svg></i><i class="on"><svg class="ic"><use href="#i-part"/></svg></i><i><svg class="ic"><use href="#i-phys"/></svg></i>
          </div>
        </header>
        <div class="pbody">
          <div class="crumbs">
            <svg class="ic"><use href="#i-pin"/></svg><svg class="ic ml6"><use href="#i-scene"/></svg><i class="tri-s ml6"></i>
            <svg class="ic ml14"><use href="#i-cube"/></svg><span class="ml3">Cylinder</span><i class="tri-s ml16"></i>
            <svg class="ic ml14"><use href="#i-part"/></svg><span class="ml4">ParticleSystem</span>
          </div>
          <div class="listrow mt15">
            <div class="listbox">
              <div class="listsel"><svg class="ic"><use href="#i-part"/></svg><span class="ml4 f1 white">ParticleSystem</span><svg class="ic"><use href="#i-rcam"/></svg><svg class="ic ml12"><use href="#i-eye"/></svg></div>
              <div class="listfoot"><svg class="exp-s"><use href="#i-exp"/></svg><i class="grab"></i></div>
            </div>
            <div class="stack side">
              <div class="ib"><svg class="ic"><use href="#i-plus"/></svg></div>
              <div class="ib"><i class="minusbar"></i></div>
              <div class="ib drk"><i class="menu-tri"></i></div>
            </div>
          </div>
          <div class="prow mt5">
            <div class="plabel">設定:</div>
            <div class="grp fw">
              <div class="hbtn-in w32"><svg class="ic"><use href="#i-part"/></svg><svg class="ud"><use href="#i-ud"/></svg></div>
              <div class="tf f1">ParticleSettings</div>
              <div class="ib w20 txt">F</div>
              <div class="ib w20"><svg class="ic"><use href="#i-plus"/></svg></div>
              <div class="ib w20"><svg class="ic dim"><use href="#i-x"/></svg></div>
            </div>
          </div>
          <div class="prow mt4">
            <div class="plabel">タイプ:</div>
            <div class="dd w109"><span>エミッター</span><svg class="ud"><use href="#i-ud"/></svg></div>
            <div class="num solo w109 ml8"><span>シード:</span><b>0</b></div>
          </div>
          <div class="sep mt12"></div>
          <div class="ph h22"><i class="tri-d"></i><span>放射</span><i class="grip"></i></div>
          <div class="num solo mt10"><span>数:</span><b>20000</b></div>
          <div class="cols mt6">
            <div class="stack r9"><div class="num"><span>開始:</span><b>1.000</b></div><div class="num"><span>終了:</span><b>120.000</b></div></div>
            <div class="stack r9"><div class="num"><span>寿命:</span><b>10.000</b></div><div class="num slider"><i class="fill" style="width:71%"></i><span>ランダム:</span><b>0.700</b></div></div>
          </div>
          <div class="plabel block mt7">発生源:</div>
          <div class="seg mt6"><div>頂点</div><div class="on">面</div><div>ボリューム</div></div>
          <div class="cols chkrow"><div class="chk"><i class="box on"></i><span>ランダム</span></div><div class="chk"><i class="box on"></i><span>等分布</span></div></div>
          <div class="seg mt6"><div class="on">ジッター</div><div>ランダム</div><div>グリッド</div></div>
          <div class="cols mt6">
            <div class="num solo"><span>発生箇所数/面:</span><b>0</b></div>
            <div class="num solo slider"><i class="fill" style="width:52%"></i><span>ジッタリング量:</span><b>1.000</b></div>
          </div>
          <div class="chk mt7 chk-wide"><i class="box"></i><span>モディファイアースタック使用</span></div>
          <div class="sep mt8"></div>
          <div class="ph h22"><i class="tri-r"></i><span>キャッシュ</span><i class="grip"></i></div>
          <div class="sep"></div>
          <div class="ph h22"><i class="tri-d"></i><span>速度</span><i class="grip"></i></div>
          <div class="cols mt10">
            <div class="plabel">エミッター形状:</div><div class="plabel">エミッターオブジェクト:</div>
          </div>
          <div class="cols mt3">
            <div class="vstack">
              <div class="num solo"><span>ノーマル:</span><b>1.000</b></div>
              <div class="stack r9 mt3"><div class="num"><span>タンジェント:</span><b>0.00</b></div><div class="num slider"><i class="fill" style="width:52%"></i><span>回転:</span><b>0.000</b></div></div>
            </div>
            <div class="stack tall r9 self-start"><div class="num"><span>X:</span><b>0.000</b></div><div class="num"><span>Y:</span><b>0.000</b></div><div class="num"><span>Z:</span><b>0.000</b></div></div>
          </div>
          <div class="plabel block mt7">その他:</div>
          <div class="cols mt5">
            <div class="num solo slider"><i class="fill" style="width:52%"></i><span>オブジェクト:</span><b>0.000</b></div>
            <div class="num solo"><span>ランダム:</span><b>0.000</b></div>
          </div>
          <div class="sep mt8"></div>
          <div class="ph h22"><i class="tri-r"></i><i class="box ph-box"></i><span>回転</span><i class="grip"></i></div>
          <div class="sep"></div>
          <div class="ph h22"><i class="tri-d"></i><span>物理演算</span><i class="grip"></i></div>
          <div class="seg mt9"><div>なし</div><div class="on">ニュートン...</div><div>キー</div><div>ボイド</div><div>流体</div></div>
          <div class="cols mt6">
            <div class="stack r9"><div class="num"><span>サイズ:</span><b>0.050</b></div><div class="num slider"><i class="fill" style="width:7%"></i><span>ランダムサイズ:</span><b>0.000</b></div></div>
            <div class="vstack">
              <div class="num solo"><span>重さ:</span><b>1.000</b></div>
              <div class="chk chk-nm mt2"><i class="box"></i><span>サイズと質量を掛ける</span></div>
            </div>
          </div>
          <div class="cols mt8">
            <div class="plabel">フォース:</div><div class="plabel">積分方法:</div>
          </div>
          <div class="cols mt2">
            <div class="vstack"><div class="num solo mt1"><span>ブラウン運動:</span><b>0.000</b></div><div class="num solo slider mt3"><i class="fill" style="width:6%"></i><span>空気抵抗:</span><b>0.000</b></div></div>
            <div class="vstack"><div class="dd"><span>中間 (推奨)</span><svg class="ud"><use href="#i-ud"/></svg></div><div class="num solo mt3"><span>タイムステップ:</span><b>0.040</b></div></div>
          </div>
          <div class="cols mt3"><div class="num solo"><span></span><b></b></div><div class="num solo"><span></span><b></b></div></div>
        </div>
        <div class="sb p-sb"><div class="sb-th p-th"></div></div>
        <div class="hatch h-bl"></div>
      </section>
    </div>
  </div>
</div>
<script src="script.js"></script>
</body>
</html>
```
FILE: styles.css
```css
* { box-sizing: border-box; }
html, body { margin: 0; width: 1842px; height: 1041px; overflow: hidden; }
body { font: 11px/14px "Noto Sans", "Noto Sans CJK JP", sans-serif; color: #0a0a0a; background: #727272; }
i, b { font-style: normal; font-weight: 400; }
.defs { position: absolute; }
.app { width: 1842px; height: 1041px; display: flex; flex-direction: column; }
.ic { width: 16px; height: 16px; flex: none; display: block; }
.ic.dim { opacity: .45; }
.ud { width: 8px; height: 14px; flex: none; color: #c8c8c8; display: block; }
.white { color: #fff; }

/* sizing helpers */
.f1 { flex: 1 1 0; min-width: 0; }
.w19{width:19px}.w20{width:20px}.w30{width:30px}.w32{width:32px}.w35{width:35px}.w37{width:37px}.w39{width:39px}.w40{width:40px}.w42{width:42px}.w43{width:43px}.w45{width:45px}.w52{width:52px}.w53{width:53px}.w55{width:55px}.w62{width:62px}.w63{width:63px}.w66{width:66px}.w75{width:75px}.w76{width:76px}.w79{width:79px}.w89{width:89px}.w90{width:90px}.w109{width:109px}.w115{width:115px}.w117{width:117px}.w120{width:120px}.w147{width:147px}.w169{width:169px}.w170{width:170px}.w191{width:191px}.w230{width:230px}
.ml1{margin-left:1px}.ml2{margin-left:2px}.ml3{margin-left:3px}.ml4{margin-left:4px}.ml5{margin-left:5px}.ml6{margin-left:6px}.ml8{margin-left:8px}.ml9{margin-left:9px}.ml11{margin-left:11px}.ml12{margin-left:12px}.ml13{margin-left:13px}.ml14{margin-left:14px}.ml16{margin-left:16px}.ml17{margin-left:17px}.ml18{margin-left:18px}.ml20{margin-left:20px}.ml24{margin-left:24px}.ml29{margin-left:29px}.ml41{margin-left:41px}
.mr3{margin-right:3px}
.mt1{margin-top:1px}.mt2{margin-top:2px}.mt3{margin-top:3px}.mt4{margin-top:4px}.mt5{margin-top:5px}.mt6{margin-top:6px}.mt7{margin-top:7px}.mt8{margin-top:8px}.mt9{margin-top:9px}.mt10{margin-top:10px}.mt11{margin-top:11px}.mt12{margin-top:12px}.mt15{margin-top:15px}
.h22{height:22px}.h23{height:23px}.h24{height:24px}

/* headers */
.hdr { position: relative; height: 26px; flex: none; display: flex; align-items: center; background: linear-gradient(#7a7a7a, #6c6c6c); }
.topbar { height: 27px; padding-top: 2px; border-bottom: 1px solid #000; }
.menu { font-size: 11.500px; color: #111; white-space: nowrap; }
.ol-hdr .menu, .ol-hdr .dd { padding-top: 2px; }
.hbtn, .hbtn-in { height: 20px; display: flex; align-items: center; justify-content: center; gap: 1px; color: #eee; background: linear-gradient(#565656, #3b3b3b); }
.hbtn { border: 1px solid #2a2a2a; border-radius: 5px; flex: none; }
.hbtn-in { flex: none; padding: 0 3px; }
.hbtn-in.f1 { flex: 1 1 0; }
.between { justify-content: space-between; padding: 0 5px 0 10px; }
.grp { height: 20px; flex: none; display: flex; border: 1px solid #2e2e2e; border-radius: 5px; overflow: hidden; background: #6f6f6f; }
.grp > * + * { border-left: 1px solid #333; }
.grp.fw { width: 226px; }
.tf { height: 18px; display: flex; align-items: center; padding: 0 5px; background: linear-gradient(#8b8b8b, #b8b8b8); color: #111; }
.keyf { padding: 0 2px; }
.ib { height: 18px; flex: none; display: flex; align-items: center; justify-content: center; background: linear-gradient(#939393, #6c6c6c); }
.ib.f1 { flex: 1 1 0; }
.ib.drk { background: linear-gradient(#565656, #3b3b3b); }
.ib.lit { background: linear-gradient(#9a9a9a, #7a7a7a); }
.ib.act { background: linear-gradient(#4672b6, #5a84c6); }
.ib.txt { color: #111; }
.ib .ic { width: 15px; height: 15px; }
.dd { height: 20px; flex: none; display: flex; align-items: center; padding: 0 4px 0 7px; color: #f2f2f2; border: 1px solid #2a2a2a; border-radius: 5px; background: linear-gradient(#575757, #3a3a3a); }
.dd span { flex: 1 1 0; white-space: nowrap; overflow: hidden; }
.dd.full { width: 100%; }
.stats { margin-left: 9px; font-size: 11px; letter-spacing: -.1px; color: #101010; white-space: nowrap; }
.layers { width: 49px; height: 20px; flex: none; display: grid; grid-template-columns: repeat(5, 1fr); grid-template-rows: 1fr 1fr; border: 1px solid #3a3a3a; border-radius: 4px; overflow: hidden; gap: 1px; background: #444; }
.layers i { background: linear-gradient(#8c8c8c, #7a7a7a); }
.layers i.on { background: radial-gradient(circle, #e8902c 0 2px, #7a7a7a 2.500px); }
.searchbox { width: 112px; height: 20px; flex: none; display: flex; align-items: center; padding-left: 3px; border: 1px solid #3a3a3a; border-right: 0; border-radius: 6px 0 0 6px; background: linear-gradient(#8f8f8f, #bcbcbc); }

/* corner hatches */
.hatch { position: absolute; width: 12px; height: 12px; z-index: 6; background: repeating-linear-gradient(135deg, #d0d0d0 0 1px, #444 1px 3px); }
.h-bl { left: 0; bottom: 0; clip-path: polygon(0 0, 100% 100%, 0 100%); opacity: .8; }
.h-tr { right: 0; top: 0; clip-path: polygon(0 0, 100% 0, 100% 100%); opacity: .8; }
.h-tl { left: 0; top: 0; clip-path: polygon(0 0, 100% 0, 0 100%); opacity: .8; }

/* layout */
.main { flex: 1 1 0; display: flex; min-height: 0; }
.leftcol { width: 1468px; display: flex; flex-direction: column; }
.rightcol { width: 374px; display: flex; flex-direction: column; border-left: 1px solid #000; overflow: hidden; }

/* viewport */
.viewport { position: relative; height: 892px; flex: none; background: #393939; overflow: hidden; }
.scene3d { position: absolute; inset: 0; width: 1468px; height: 892px; }
.gridlines line { stroke: #505050; stroke-width: 1; }
.axis-x { stroke: #8c1f1f; stroke-width: 1; }
.axis-y { stroke: #2c752c; stroke-width: 1; }
.lampline { stroke: #2f2f2f; stroke-width: .8; }
.lampring { fill: none; stroke: #111; stroke-dasharray: 5 3; }
.ico line { stroke: #0c0c0c; stroke-width: 1; }
.cyl { fill: none; stroke: #f2a445; stroke-width: 1.100; }
.gizmo { fill: none; stroke: #fff; stroke-width: 1.200; }
.cur-w { fill: none; stroke: #fff; stroke-width: 1.300; }
.cur-r { fill: none; stroke: #e00000; stroke-width: 1.300; stroke-dasharray: 7.500 7.500; }
.vp-label { position: absolute; color: #f2f2f2; white-space: nowrap; }
.vp-view { left: 179px; top: 10px; }
.vp-obj { left: 230px; top: 871px; }
.mini { position: absolute; font-size: 10px; line-height: 10px; }
.mini-z { left: 187px; top: 834px; color: #2a3ae0; }
.mini-y { left: 178px; top: 848px; color: #1fa81f; }
.mini-x { left: 211px; top: 853px; color: #d02020; }
.npanel { position: absolute; right: 1px; top: 23px; width: 12px; height: 11px; background: #4e4e4e; color: #c0c0c0; font-size: 10px; line-height: 10px; text-align: center; }

.toolcol { position: relative; z-index: 5; width: 160px; height: 892px; display: flex; flex-direction: column; border-right: 1px solid #5a5a5a; }
.toolrow { height: 675px; flex: none; display: flex; background: #727272; border-bottom: 1px solid #5c5c5c; }
.tabs { width: 19px; flex: none; background: #4a4a4a; padding: 7px 0 0 3px; display: flex; flex-direction: column; gap: 6px; }
.tab { width: 16px; flex: none; background: #5c5c5c; border-radius: 3px 0 0 3px; display: flex; align-items: center; justify-content: center; color: #0c0c0c; overflow: hidden; }
.tab span { writing-mode: vertical-rl; text-orientation: sideways; transform: rotate(180deg); white-space: nowrap; line-height: 16px; font-size: 10.500px; }
.tab.active { background: #727272; }
.t-a { height: 43px; } .t-b { height: 32px; } .t-c { height: 91px; } .t-d { height: 54px; } .t-e { height: 98px; }
.shelf { flex: 1 1 0; padding-right: 1px; }
.ph { display: flex; align-items: center; font-size: 11.500px; padding-left: 8px; }
.ph span { white-space: nowrap; }
.ph .grip { margin-left: auto; margin-right: 6px; }
.ph-shelf { padding-left: 14px; font-size: 12px; }
.ph-shelf .grip { margin-right: 11px; }
.ph-op { padding: 2px 0 0 13px; font-size: 12px; }
.tri-d { width: 0; height: 0; flex: none; border: 4.500px solid transparent; border-top: 9px solid #2e2e2e; border-bottom: 0; margin-right: 4px; }
.tri-r { width: 0; height: 0; flex: none; border: 4.500px solid transparent; border-left: 9px solid #3a3a3a; border-right: 0; margin-right: 4px; }
.tri-s { width: 0; height: 0; flex: none; border: 3.500px solid transparent; border-left: 4px solid #3a3a3a; border-right: 0; }
.grip { width: 10px; height: 7px; flex: none; background: radial-gradient(circle at 1px 1px, #2a2a2a .5px, transparent .9px) 0 0/2.500px 2.500px; opacity: .7; }
.tools { margin-left: 9px; width: 123px; }
.sep { height: 2px; flex: none; background: linear-gradient(#4d4d4d 50%, #808080 50%); }
.sep-shelf { margin-left: 5px; }

.stack { display: flex; flex-direction: column; border: 1px solid #2e2e2e; overflow: hidden; flex: none; }
.stack > * { height: 19px; flex: none; border-radius: 0 !important; }
.stack > :first-child { height: 18px; }
.stack > * + * { border-top: 1px solid #2e2e2e; }
.stack.tall > * + * { height: 19.500px; }
.r5 { border-radius: 5px; } .r9 { border-radius: 9px; }
.tb { height: 19.500px; display: flex; align-items: center; padding: 0 7px; color: #0c0c0c; white-space: nowrap; background: linear-gradient(#a0a0a0, #6f6f6f); }
.tb.solo { height: 20px; border: 1px solid #2e2e2e; border-radius: 5px; }
.split { display: flex; height: 20px; border: 1px solid #2e2e2e; border-radius: 5px; overflow: hidden; }
.split .tb { height: 18px; flex: 1 1 0; padding-left: 8px; }
.split .tb + .tb { border-left: 1px solid #2e2e2e; }
.lbl { height: 18px; display: flex; align-items: center; padding-left: 8px; }

.oppanel { position: relative; flex: 1 1 0; min-height: 0; overflow: hidden; background: #727272; }
.lbl-op { height: 18px; display: flex; align-items: center; padding: 2px 0 0 15px; }
.op-stack { margin-left: 9px; width: 124px; margin-top: 1px; }
.sb { position: absolute; width: 13px; border: 1px solid #555; border-radius: 7px; background: linear-gradient(90deg, #5e5e5e, #6c6c6c); }
.sb-th { border-radius: 6px; background: linear-gradient(90deg, #a8a8a8, #7a7a7a); border-bottom: 1px solid #666; }
.op-sb { left: 142px; top: 5px; height: 208px; }
.op-th { height: 97px; }
.chk { display: flex; align-items: center; height: 18px; white-space: nowrap; }
.box { position: relative; width: 14px; height: 14px; flex: none; border-radius: 4px; background: linear-gradient(#3d3d3d, #5a5a5a); border: 1px solid #2e2e2e; }
.box.on::after { content: ""; position: absolute; left: 2.500px; top: 0; width: 7px; height: 4px; border: 2px solid #e8e8e8; border-top: 0; border-right: 0; transform: rotate(-50deg) translate(-1px, 4px); }
.chk .box { margin: 0 8px 0 3px; }
.op-chk { height: 20px; margin-left: 8px; }
.chk-wide { height: 18px; }
.chk-nm { height: 19px; }

.num { position: relative; height: 19px; flex: none; display: flex; align-items: center; padding: 0 5px; white-space: nowrap; color: #0c0c0c; background: linear-gradient(#939393, #bdbdbd); }
.num::before { content: ""; flex: none; width: 0; height: 0; border: 3.500px solid transparent; border-right: 4px solid #5e5e5e; border-left: 0; margin-right: 7px; }
.num::after { content: ""; flex: none; width: 0; height: 0; border: 3.500px solid transparent; border-left: 4px solid #5e5e5e; border-right: 0; margin-left: 7px; }
.num span { position: relative; }
.num b { position: relative; margin-left: auto; font-size: 12px; }
.num.solo { border: 1px solid #2e2e2e; border-radius: 9px; }
.slider { padding: 0 16px; }
.slider::before, .slider::after { display: none; }
.fill { position: absolute; left: 0; top: 0; bottom: 0; background: linear-gradient(#575757, #7a7a7a); }
.pair { display: flex; height: 20px; flex: none; border: 1px solid #2e2e2e; border-radius: 9px; overflow: hidden; }
.pair .num { flex: 1 1 0; height: 18px; }
.pair .num + .num { border-left: 1px solid #2e2e2e; }
.hdr > .num.solo { height: 20px; }

/* timeline */
.timeline { position: relative; height: 51px; flex: none; border-top: 1px solid #000; background: #424242; }
.timeline::after { content: ""; position: absolute; inset: 0; background:
  repeating-linear-gradient(90deg, transparent 0 42px, rgba(0,0,0,.17) 42px 42.800px) 208px 0/42.800px 100%,
  repeating-linear-gradient(90deg, transparent 0 20.600px, rgba(0,0,0,.1) 20.600px 21.400px) 229.400px 0/21.400px 100%; }
.range { position: absolute; left: 252px; top: 0; bottom: 0; width: 513px; background: #6e6e6e; }
.range-bar { position: absolute; left: 0; right: 0; bottom: 0; height: 3px; background: #8a5c5c; }
.playhead { position: absolute; z-index: 2; left: 248px; top: 0; bottom: 0; width: 4px; background: #5dbb2f; }
.ruler { height: 18px; flex: none; padding: 1px 4px 4px; background: #727272; }
.ruler-bar { position: relative; height: 13px; display: flex; align-items: center; padding-left: 11.600px; border: 1px solid #4a4a4a; border-radius: 7px; background: linear-gradient(#7f7f7f, #b2b2b2); overflow: hidden; }
.ruler-bar span { width: 42.800px; flex: none; text-align: center; color: #111; }
.scrub { position: absolute; left: 0; top: 0; width: 10px; height: 11px; border-radius: 6px; background: #6a6a6a; }

/* outliner */
.outliner { position: relative; height: 151px; flex: none; overflow: hidden; border-bottom: 1px solid #000; background: #727272; }
.ol-row { height: 20px; display: flex; background: #747474; }
.ol-row.alt { background: #6e6e6e; }
.ol-row.dk { background: #6b6b6b; }
.ol-row.end { height: 11px; background: #747474; }
.ol-row.sel .ol-main { background: #7d868c; }
.ol-main { width: 314px; display: flex; align-items: center; white-space: nowrap; }
.ol-t { padding-top: 4px; }
.col { width: 20px; flex: none; border-left: 1px solid #5f5f5f; display: flex; align-items: center; justify-content: center; }
.exp { width: 10px; height: 10px; flex: none; }
.exp-s { width: 9px; height: 9px; opacity: .55; }
.hl { height: 1px; flex: none; background: #2e2e2e; }
.w3 { width: 3px; } .w8 { width: 8px; }
.hi { width: 18px; height: 18px; margin-right: -1px; flex: none; display: flex; align-items: center; justify-content: center; border-radius: 50%; }
.hi-g { background: rgba(200,200,200,.35); }
.hi-b { background: rgba(190,200,225,.5); }
.hi-o { background: #b57a42; }
.ol-sep { width: 2px; height: 12px; flex: none; background: #4a4a4a; margin: 0 9px 0 9px; }
.ol-tree { position: absolute; left: 28px; top: 20px; width: 1px; height: 110px; background: #2e2e2e; }

/* properties */
.properties { position: relative; flex: 1 1 0; min-height: 0; overflow: hidden; background: #727272; }
.ptabs { margin-left: 9px; height: 20px; display: flex; border: 1px solid #2e2e2e; border-radius: 5px; overflow: hidden; background: #4f4f4f; }
.ptabs i { width: 19.800px; display: flex; align-items: center; justify-content: center; }
.ptabs i:not(.on) .ic { opacity: .72; }
.ptabs i.on { background: #5682c4; }
.pbody { padding: 0 25px 0 8px; display: flex; flex-direction: column; }
.pbody .sep { margin-left: -3px; margin-right: -3px; }
.pbody .ph { padding-left: 5px; flex: none; }
.pbody .ph .grip { margin-right: 5px; }
.crumbs { height: 20px; margin-top: 9px; display: flex; align-items: center; padding-left: 3px; white-space: nowrap; }
.listrow { display: flex; justify-content: space-between; height: 60px; flex: none; }
.listbox { width: 312px; height: 43px; border: 1px solid #3c3c3c; border-radius: 4px; padding: 8px 5px 0; background: #6e6e6e; }
.listsel { height: 18px; display: flex; align-items: center; padding: 0 1px 0 3px; border-radius: 3px; background: #5680c4; }
.listfoot { display: flex; align-items: center; height: 14px; padding-left: 4px; position: relative; }
.grab { width: 14px; height: 3px; margin-left: 139px; border-top: 1px solid #ddd; border-bottom: 1px solid #ddd; }
.side { width: 20px; height: 59px; border-radius: 5px; margin-top: 1px; }
.side .ib { height: 19.500px; }
.minusbar { width: 11px; height: 3px; background: #eee; border: 1px solid #222; display: block; box-sizing: content-box; }
.menu-tri { width: 0; height: 0; border: 5px solid transparent; border-top: 9px solid #111; border-bottom: 0; }
.prow { height: 19px; flex: none; display: flex; align-items: center; }
.prow .grp { height: 19px; }
.prow .dd, .prow .num { height: 19px; }
.prow .tf, .prow .ib, .prow .hbtn-in { height: 17px; }
.plabel { width: 114px; padding-left: 8px; white-space: nowrap; flex: none; height: 18px; display: flex; align-items: center; color: #111; }
.plabel.block { width: auto; }
.cols .plabel { width: auto; }
.cols { display: grid; grid-template-columns: 1fr 1fr; gap: 8px; flex: none; }
.chkrow { margin-top: 7px; height: 18px; }
.self-start { align-self: start; }
.vstack { display: flex; flex-direction: column; }
.vstack .dd { height: 19px; }
.seg { height: 19px; flex: none; display: flex; border: 1px solid #2e2e2e; border-radius: 5px; overflow: hidden; }
.seg > div { flex: 1 1 0; display: flex; align-items: center; justify-content: center; color: #f4f4f4; white-space: nowrap; background: linear-gradient(#555, #3a3a3a); }
.seg > div + div { border-left: 1px solid #222; }
.seg > .on { color: #06101e; background: linear-gradient(#4571b4, #5883c6); }
.ph-box { margin: 0 6px 0 0; }
.p-sb { left: 356px; top: 31px; height: 802px; width: 12px; }
.p-th { height: 555px; }
```
FILE: script.js
```js
// Perspective floor grid and icosphere wireframe for the 3D viewport.
const NS = 'http://www.w3.org/2000/svg';
const H = (u, v) => {
  const w = 0.03017 * u + 0.0866 * v + 1;
  return [(90.3 * u + 48.51 * v + 814) / w, (6.355 * u + 17.45 * v + 473) / w];
};
function addLine(parent, a, b) {
  const l = document.createElementNS(NS, 'line');
  l.setAttribute('x1', a[0].toFixed(1));
  l.setAttribute('y1', a[1].toFixed(1));
  l.setAttribute('x2', b[0].toFixed(1));
  l.setAttribute('y2', b[1].toFixed(1));
  parent.appendChild(l);
  return l;
}
const grid = document.getElementById('grid');
for (let k = -8; k <= 8; k++) {
  if (k === 0) continue;
  addLine(grid, H(k, -8), H(k, 8));
  addLine(grid, H(-8, k), H(8, k));
}
function setAxis(id, a, b) {
  const el = document.getElementById(id);
  el.setAttribute('x1', a[0]); el.setAttribute('y1', a[1]);
  el.setAttribute('x2', b[0]); el.setAttribute('y2', b[1]);
}
setAxis('axis-x', H(-8, 0), H(8, 0));
setAxis('axis-y', H(0, -8), H(0, 8));

// Icosphere: icosahedron subdivided once.
const verts = [[0, 0, 1]];
const s5 = Math.sqrt(5);
for (let k = 0; k < 5; k++) {
  const a = -Math.PI / 2 + k * 2 * Math.PI / 5;
  verts.push([2 / s5 * Math.cos(a), 2 / s5 * Math.sin(a), 1 / s5]);
}
for (let k = 0; k < 5; k++) {
  const a = -Math.PI / 2 + Math.PI / 5 + k * 2 * Math.PI / 5;
  verts.push([2 / s5 * Math.cos(a), 2 / s5 * Math.sin(a), -1 / s5]);
}
verts.push([0, 0, -1]);
let faces = [];
for (let k = 0; k < 5; k++) {
  const n = (k + 1) % 5;
  faces.push([0, 1 + k, 1 + n]);
  faces.push([1 + k, 6 + k, 1 + n]);
  faces.push([1 + n, 6 + k, 6 + n]);
  faces.push([11, 6 + n, 6 + k]);
}
const mid = {};
const midpoint = (a, b) => {
  const key = Math.min(a, b) + '_' + Math.max(a, b);
  if (mid[key] !== undefined) return mid[key];
  const m = [0, 1, 2].map(i => verts[a][i] + verts[b][i]);
  const len = Math.hypot(m[0], m[1], m[2]);
  verts.push(m.map(c => c / len));
  mid[key] = verts.length - 1;
  return mid[key];
};
const fine = [];
faces.forEach(([a, b, c]) => {
  const ab = midpoint(a, b), bc = midpoint(b, c), ca = midpoint(c, a);
  fine.push([a, ab, ca], [ab, b, bc], [ca, bc, c], [ab, bc, ca]);
});
const el = 12 * Math.PI / 180, R = 59, cx = 806, cy = 309;
const proj = v => [cx + R * v[0], cy - R * (v[2] * Math.cos(el) + v[1] * Math.sin(el))];
const seen = new Set();
const ico = document.getElementById('ico');
fine.forEach(f => {
  for (let i = 0; i < 3; i++) {
    const a = f[i], b = f[(i + 1) % 3];
    const key = Math.min(a, b) + '_' + Math.max(a, b);
    if (seen.has(key)) continue;
    seen.add(key);
    addLine(ico, proj(verts[a]), proj(verts[b]));
  }
});
```
